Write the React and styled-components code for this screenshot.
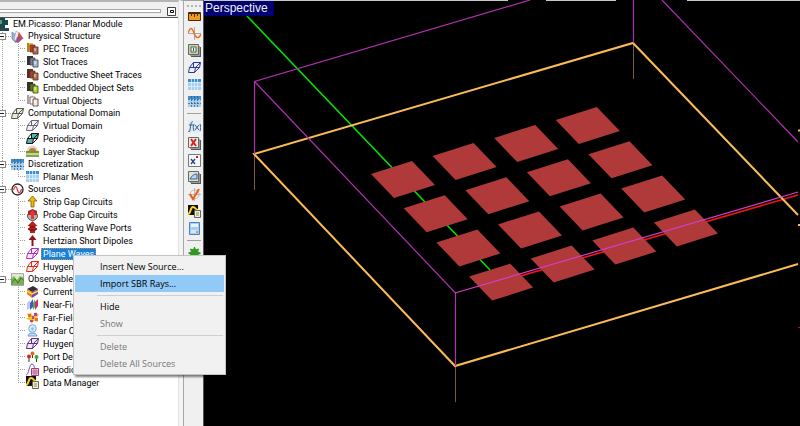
import React, { useState } from "react";
import styled, { createGlobalStyle, css } from "styled-components";

const GlobalStyle = createGlobalStyle`
  * {
    box-sizing: border-box;
  }

  body {
    margin: 0;
    overflow: hidden;
    background: #f0f0f0;
    font-family: Roboto, "Liberation Sans", sans-serif;
    font-size: 9px;
    color: #000;
  }

  button {
    padding: 0;
    border: none;
    background: none;
    font: inherit;
    color: inherit;
  }

  ul {
    margin: 0;
    padding: 0;
    list-style: none;
  }
`;

const Window = styled.main`
  position: relative;
  display: flex;
  height: 100vh;
`;

const SidePanel = styled.aside`
  display: flex;
  flex-direction: column;
  flex: 0 0 179px;
  border-top: 2px solid #b4b4b4;
  border-right: 1px solid #e2e2e2;
`;

const PanelHeader = styled.header`
  display: flex;
  align-items: center;
  gap: 6px;
  height: 16px;
  padding: 3px 2px 0 0;
  border-bottom: 1px solid #555;
`;

const Grip = styled.div`
  flex: 1;
  height: 4px;
  border: 1px solid #a8a8a8;
  border-left: none;
  background: #fff;
`;

const PanelButton = styled.button`
  display: flex;
  width: 9px;
  height: 9px;
`;

const Tree = styled.div`
  flex: 1;
  background: #fff;
  white-space: nowrap;
  overflow: hidden;
`;

const dotsDown = "repeating-linear-gradient(#a0a0a0 0 1px, #fff 1px 2px)";
const dotsAcross =
  "repeating-linear-gradient(90deg, #a0a0a0 0 1px, #fff 1px 2px)";

const Group = styled.section`
  ${(props) =>
    !props.$last &&
    css`
      background: ${dotsDown} 2px 0 / 1px 100% no-repeat;
    `}
`;

const GroupRow = styled.div`
  display: flex;
  align-items: center;
  height: 12px;
`;

const Expander = styled.button`
  display: flex;
  width: 6px;
  height: 7px;
  border: 1px solid #888;
  border-left: none;
  background: linear-gradient(#222, #222) 0 2px / 4px 1px no-repeat #fff;
`;

const Link = styled.span`
  width: 5px;
  height: 1px;
  background: ${dotsAcross};
`;

const LeafList = styled.ul`
  margin-left: 18px;
`;

const Leaf = styled.li`
  display: flex;
  align-items: center;
  height: 13px;
`;

const Elbow = styled.span`
  align-self: stretch;
  width: 8px;
  background: ${dotsDown} 0 0 / 1px ${(props) => (props.$last ? "7px" : "100%")}
      no-repeat,
    ${dotsAcross} 0 6px / 100% 1px no-repeat;
`;

const Icon = styled.svg`
  flex: none;
  display: block;
  width: ${(props) => props.$width || 13}px;
  height: ${(props) => props.$height || 13}px;
`;

const Label = styled.button`
  height: 12px;
  margin-left: 2px;
  padding: 0 2px;
  line-height: 12px;
  ${(props) =>
    props.$selected &&
    css`
      background: #1482dc;
      color: #fff;
      outline: 1px dotted #d98a3c;
      outline-offset: -1px;
    `}
`;

const Toolbar = styled.nav`
  display: flex;
  flex-direction: column;
  align-items: center;
  flex: 0 0 24px;
  padding: 4px 0 0 2px;
  border-top: 1px solid #a0a0a0;
  border-left: 4px solid #f4f4f4;
  box-shadow: inset 1px 0 #a8a8a8;
`;

const ToolbarGrip = styled.div`
  width: 14px;
  height: 2px;
  margin-bottom: 1px;
  background: repeating-linear-gradient(90deg, #b4b4b4 0 2px, transparent 2px 4px);
`;

const ToolGroup = styled.div`
  display: flex;
  flex-direction: column;
  & + & {
    margin-top: 3px;
    padding-top: 4px;
    border-top: 1px solid #a0a0a0;
  }
`;

const ToolButton = styled.button`
  display: flex;
  align-items: center;
  justify-content: center;
  width: 14px;
  height: 17px;
`;

const Viewport = styled.section`
  position: relative;
  flex: 1;
  min-width: 0;
  background: #000;
  border-left: 1px solid #555;
`;

const Scene = styled.svg`
  display: block;
  width: 100%;
  height: 100%;
`;

const ViewName = styled.h1`
  position: absolute;
  top: 1px;
  left: 0;
  margin: 0;
  padding: 0 6px 0 1px;
  background: #000070;
  color: #f0f0f0;
  font: 12px/15px "Liberation Sans", sans-serif;
`;

const ContextMenu = styled.div`
  position: absolute;
  top: 255px;
  left: 73px;
  width: 153px;
  padding: 2px 1px;
  border: 1px solid #c4c4c4;
  background: #f1f1f1;
  box-shadow: 2px 2px 2px rgba(0, 0, 0, 0.5);
  font-family: "Open Sans", "Noto Sans", sans-serif;
`;

const MenuItem = styled.button`
  display: block;
  width: 100%;
  height: 17px;
  padding-left: 25px;
  line-height: 17px;
  text-align: left;

  &:disabled {
    color: #777;
  }

  ${(props) =>
    props.$active &&
    css`
      background: #91c9f7;
    `}
`;

const MenuDivider = styled.hr`
  height: 1px;
  margin: 3px 1px 2px 22px;
  border: none;
  background: #cfcfcf;
`;

function Sheets({ back, mid, front }) {
  return (
    <>
      <path d="M1 1h6v9H1z" fill={back} />
      <path d="M1 1h2v9H1z" fill="#333" opacity=".4" />
      <path d="M4 3h5v7H4z" fill={mid} stroke="#5b2a22" strokeWidth=".7" />
      <path d="M7 5h5v7H7z" fill={front} stroke="#432" strokeWidth=".8" />
      <path d="M8 6h2v3H8z" fill="#fff" opacity=".4" />
    </>
  );
}

function Wire({ color, fill = "none" }) {
  return (
    <g stroke={color} fill={fill}>
      <path d="M5.500 1.500h7l-1 5h-6z" />
      <path d="M1.500 6.500h6l-1 5h-6z" />
      <path d="M5.500 1.500l-4 5M12.500 1.500l-5 5M11.500 6.500l-5 5" fill="none" />
    </g>
  );
}

function Grid({ dark }) {
  return (
    <>
      <path d="M0 1h13v11H0z" fill="#a9cff0" />
      <path d="M0 1h13v3H0z" fill="#3c8fd0" />
      <path
        d="M0 4.5h13M0 8.5h13M3.5 1v11M6.5 1v11M9.5 1v11"
        stroke={dark ? "#36536e" : "#e8f4ff"}
        strokeWidth=".7"
        strokeDasharray={dark ? "2 1" : "none"}
      />
    </>
  );
}

function Page({ children, tint = "#eee" }) {
  return (
    <>
      <path d="M3 3h10v10H3z" fill="#555" />
      <path d="M2 2h10v10H2z" fill="#999" />
      <path d="M.5.5h10v10H.5z" fill={tint} stroke="#666" />
      {children}
    </>
  );
}

const ICONS = {
  root: (
    <>
      <path d="M0 0h5v2h3v5H5v3h4v3H0z" fill="#174b48" />
      <path d="M0 10h9v2H0z" fill="#345" />
      <path d="M0 2h2v4H0z" fill="#5b9a91" />
    </>
  ),
  physical: (
    <>
      <path d="M1 2l4 3v8L1 9z" fill="#8db5dc" stroke="#55779c" strokeWidth=".6" />
      <path d="M5 1l3 2-2 9-3-2z" fill="#eee" stroke="#999" strokeWidth=".6" />
      <path d="M8 2l4 6-5 5-2-1z" fill="#d84848" />
      <path d="M6 7l7 1-5 4-4-1z" fill="#7b5aa4" opacity=".7" />
    </>
  ),
  pec: <Sheets back="#f0c51c" mid="#c43a2d" front="#b56a55" />,
  slot: <Sheets back="#30363c" mid="#77838f" front="#9fc5e4" />,
  sheet: <Sheets back="#6c3021" mid="#a54839" front="#b96c48" />,
  embedded: <Sheets back="#2a3a20" mid="#4d7c28" front="#a4dc28" />,
  virtual: <Sheets back="#eee" mid="#fff" front="#f5e8e8" />,
  domain: <Wire color="#555" fill="#e4ecd4" />,
  virtualDomain: <Wire color="#667" fill="#f0f2f5" />,
  periodicity: <Wire color="#111" fill="#53b6ae" />,
  stackup: (
    <>
      <path d="M1 6a5 5 0 0 1 11 0z" fill="#ded8bc" />
      <path d="M3 6a3.500 3 0 0 1 7 0z" fill="#d86a4a" />
      <path d="M0 6h13v2H0z" fill="#5d9c36" />
      <path d="M0 8h13v2H0z" fill="#c5dc62" />
      <path d="M0 10h13v2H0z" fill="#8b9a78" />
    </>
  ),
  mesh: <Grid />,
  meshDark: <Grid dark />,
  sources: (
    <>
      <circle cx="6.500" cy="6.500" r="5.500" fill="#fff" stroke="#222" strokeWidth="1.300" />
      <path d="M2.500 7c1.500-5 3-4 4 0s2.500 4 4-1" fill="none" stroke="#d33" strokeWidth="1.200" />
    </>
  ),
  strip: (
    <path d="M6.500 1l4.500 5H8v6H5V6H2z" fill="#f2b705" stroke="#7c5a0a" strokeWidth=".8" />
  ),
  probe: (
    <>
      <ellipse cx="6.500" cy="8" rx="5" ry="4.500" fill="#b8b0b0" stroke="#555" />
      <path d="M2 3l4.500-2L11 3v4H2z" fill="#a5282c" />
      <path d="M6.500 2l3.500 4H8v5H5V6H3z" fill="#e23535" />
    </>
  ),
  scatter: (
    <>
      <path d="M6.500 0l5 5H9v2h2v2H9v3H4V9H2V7h2V5H1.500z" fill="#c01c1c" />
      <path d="M3 6h7M3 9h7" stroke="#551313" />
    </>
  ),
  dipole: <path d="M6.500 1l4 5H7.500v6h-2V6h-3z" fill="#8c1420" />,
  plane: <Wire color="#b42cc4" fill="#fbeaff" />,
  huygensSource: <Wire color="#e02a1c" fill="#ffeceb" />,
  observables: (
    <>
      <path d="M0 1h13v11H0z" fill="#79b254" />
      <path d="M0 1h13v4L9 3 6 7 3 3 0 6z" fill="#dfead2" />
      <path d="M0 11l4-5 3 4 3-5 3 3" stroke="#42751f" fill="none" />
      <path d="M.5.5h12v12H.5z" fill="none" stroke="#888" strokeWidth=".7" />
    </>
  ),
  current: (
    <>
      <path d="M1 4l6-3 5 3-6 3z" fill="#3c2b34" />
      <path d="M1 4l5 3v6L1 9z" fill="#e27a28" />
      <path d="M6 7l6-3v5l-6 4z" fill="#7c42ba" />
      <path d="M1 6l5 3 6-3" stroke="#f2e12e" strokeWidth="1.500" fill="none" />
    </>
  ),
  near: (
    <>
      <path d="M1 5l3-3v8l-3 2z" fill="#c8c8dc" />
      <path d="M4 5l3-4v8l-3 3z" fill="#4657c8" />
      <path d="M7 5l2-4v8l-2 3z" fill="#3cba42" />
      <path d="M9 4l3-3v7l-3 4z" fill="#d42a72" />
    </>
  ),
  far: (
    <>
      <path d="M1 3l4-1 2 3 3-4 3 3-3 3 2 4-4-1-3 3-1-4-4-1 3-2z" fill="#f2c41a" />
      <path d="M2 3h3v3H2zM9 7h3v3H9z" fill="#ec6c2a" />
      <path d="M8 2h3v3H8zM4 9h3v2H4zM6 5h2v3H6z" fill="#b53cc0" />
    </>
  ),
  radar: (
    <>
      <path d="M2 12c0-4 9-4 9 0z" fill="#c4dcf2" stroke="#6c9ccc" />
      <circle cx="6.500" cy="4.500" r="3.800" fill="#dcebfa" stroke="#78a8d8" />
      <path d="M5 4l2-1 1 2-2 2z" fill="#8fb8e0" />
    </>
  ),
  huygens: <Wire color="#5d2c8c" fill="#f0e8fa" />,
  port: (
    <>
      <path d="M3 6v6M6.500 3v5M10.500 6v6" stroke="#333" />
      <circle cx="3" cy="6.500" r="2" fill="#d22" />
      <circle cx="6.500" cy="3.500" r="2" fill="#d97020" />
      <circle cx="10.500" cy="7" r="2" fill="#2fae3a" />
    </>
  ),
  periodic: (
    <>
      <path d="M0 12c3 0 3-11 6-11 2 0 2 3 3 5" fill="none" stroke="#6b50b8" />
      <path d="M5.500 5.500h7v7h-7z" fill="#f3d3e2" stroke="#a33c7b" />
      <path d="M8 5v7M10 5v7M5 8h7M5 10h7" stroke="#a33c7b" strokeWidth=".6" />
    </>
  ),
  data: (
    <>
      <path d="M0 0h10v10H0z" fill="#111" />
      <path d="M0 9c3 0 2-7 5-7s2 3 5 3" stroke="#ffd51e" strokeWidth="2" fill="none" />
      <path d="M6.500 5.500h6v7h-6z" fill="#f4edcf" stroke="#665" />
      <path d="M8 8h3M8 10h3" stroke="#887" />
    </>
  ),
  ruler: (
    <>
      <path d="M.5 2.500h12v8H.5z" fill="#f39a1c" stroke="#4a2b08" />
      <path d="M1 3h11v1H1z" fill="#3a2208" />
      <path d="M3.500 3v3M6.500 3v4M9.500 3v3" stroke="#4a2b08" />
    </>
  ),
  wave: (
    <>
      <path d="M0 6.500h13M6.500 0v13" stroke="#99a" strokeWidth=".8" />
      <path d="M0 6c2-6 4-6 6 0s5 6 7 1" stroke="#ee6c1c" strokeWidth="1.500" fill="none" />
    </>
  ),
  objects: (
    <Page tint="#c8cda8">
      <path d="M3 3h5v5H3z" fill="#eef" stroke="#486a4c" />
      <path d="M5.500 4v3" stroke="#263" />
    </Page>
  ),
  box: <Wire color="#2838a0" fill="#eef2ff" />,
  fx: (
    <>
      <path d="M0 0h13v13H0z" fill="#e2ecf4" />
      <path
        d="M5 2c-2-1-2 2-3 8 0 2-1 2-2 1M1 5h4M6 4c-1 2-1 5 0 7M12 4c1 2 1 5 0 7M7 5l4 5M11 5l-4 5"
        fill="none"
        stroke="#2b5784"
      />
    </>
  ),
  deleteVar: (
    <Page>
      <path d="M3 2l5 7M8 2L3 9" stroke="#e0201c" strokeWidth="2" />
    </Page>
  ),
  power: (
    <>
      <path d="M.5.5h12v12H.5z" fill="#f5f6f8" stroke="#777" />
      <path d="M3 5l4 5M7 5l-4 5" stroke="#27408c" strokeWidth="1.300" />
      <path d="M8 2h2v2H8z" fill="#c22" />
    </>
  ),
  graph: (
    <Page tint="#dfe4cc">
      <path d="M2 8h7V3C5 3 4 5 2 8z" fill="#b9d4ee" stroke="#3860a0" />
    </Page>
  ),
  check: (
    <>
      <circle cx="6.500" cy="6.500" r="4.500" fill="none" stroke="#bbb" />
      <path d="M6.500 0v13M0 6.500h13" stroke="#bbb" />
      <path d="M2 6l3 5 6-10" fill="none" stroke="#ee5a1c" strokeWidth="2" />
    </>
  ),
  calc: (
    <>
      <path d="M1.500.5h10v12h-10z" fill="#a8cff2" stroke="#4a82c0" />
      <path d="M3 2h7v3H3z" fill="#e8f4ff" />
      <path d="M3 8h7v3H3z" fill="#d2e6f8" />
      <path d="M8 9h2v2H8z" fill="#e89040" />
    </>
  ),
  gear: (
    <path
      d="M6.500 0l1 3 3-1-1 3 3 1-3 2 1 3-3-1-1 3-1-3-3 1 1-3-3-2 3-1-1-3 3 1z"
      fill="#2f9a1c"
      stroke="#2f9a1c"
    />
  ),
};

const GROUPS = [
  {
    name: "Physical Structure",
    icon: "physical",
    items: [
      ["PEC Traces", "pec"],
      ["Slot Traces", "slot"],
      ["Conductive Sheet Traces", "sheet"],
      ["Embedded Object Sets", "embedded"],
      ["Virtual Objects", "virtual"],
    ],
  },
  {
    name: "Computational Domain",
    icon: "domain",
    items: [
      ["Virtual Domain", "virtualDomain"],
      ["Periodicity", "periodicity"],
      ["Layer Stackup", "stackup"],
    ],
  },
  {
    name: "Discretization",
    icon: "meshDark",
    items: [["Planar Mesh", "mesh"]],
  },
  {
    name: "Sources",
    icon: "sources",
    items: [
      ["Strip Gap Circuits", "strip"],
      ["Probe Gap Circuits", "probe"],
      ["Scattering Wave Ports", "scatter"],
      ["Hertzian Short Dipoles", "dipole"],
      ["Plane Waves", "plane"],
      ["Huygens", "huygensSource"],
    ],
  },
  {
    name: "Observables",
    icon: "observables",
    items: [
      ["Current", "current"],
      ["Near-Field", "near"],
      ["Far-Field", "far"],
      ["Radar CS", "radar"],
      ["Huygens", "huygens"],
      ["Port Def", "port"],
      ["Periodic", "periodic"],
      ["Data Manager", "data"],
    ],
  },
];

const TOOLS = [
  ["ruler", "wave", "objects", "box", "mesh", "meshDark"],
  ["fx", "deleteVar", "power", "graph", "check", "data", "calc"],
  ["gear"],
];

function Glyph({ name }) {
  return (
    <Icon viewBox="0 0 13 13" aria-hidden="true">
      {ICONS[name]}
    </Icon>
  );
}

function TreeGroup({ group, last, selected, onSelect }) {
  const [isOpen, setIsOpen] = useState(true);

  return (
    <Group $last={last}>
      <GroupRow>
        <Expander aria-label={group.name} onClick={() => setIsOpen(!isOpen)} />
        <Link />
        <Glyph name={group.icon} />
        <Label onClick={() => onSelect(group.name)}>{group.name}</Label>
      </GroupRow>
      {isOpen && (
        <LeafList>
          {group.items.map(([name, icon], index) => (
            <Leaf key={name}>
              <Elbow $last={index === group.items.length - 1} />
              <Glyph name={icon} />
              <Label
                $selected={selected === name}
                onClick={() => onSelect(name)}
              >
                {name}
              </Label>
            </Leaf>
          ))}
        </LeafList>
      )}
    </Group>
  );
}

const PATCH_COUNT = 4;

function Patches() {
  const patches = [];
  for (let row = 0; row < PATCH_COUNT; row++) {
    for (let col = 0; col < PATCH_COUNT; col++) {
      const x = row * 32.7 + col * 61.6;
      const y = row * 34.2 - col * 18;
      patches.push(
        <path
          key={`${row}-${col}`}
          d="M371 174l41-13 23 24-41 13z"
          transform={`translate(${x} ${y})`}
        />
      );
    }
  }
  return <g fill="#b03a3a">{patches}</g>;
}

function PlanarScene() {
  return (
    <Scene viewBox="204 0 596 426" preserveAspectRatio="xMinYMin slice">
      <path d="M204 .5h304M546 .5h70M687 .5h113" stroke="#c8c8c8" />
      <path d="M254.500 155v35M633.500 43v36M455.500 366v36" stroke="#7a5c3c" />
      <path d="M247 16l243 254" stroke="#00e600" strokeWidth="1.500" />
      <path d="M500 282l298-87" stroke="#f01414" strokeWidth="1.600" />
      <Patches />
      <g stroke="#fbbb55" strokeWidth="2" fill="none">
        <path d="M798 215L633 43 254 154 455 366 798 264" />
        <path d="M798 130.500h2M798 225h2" />
      </g>
      <g stroke="#b030b0" strokeWidth="1.200" fill="none">
        <path d="M530 0L254.500 81.500V154M254.500 81.500L455.500 293v73M633.500 0v43M662 0l136 142" />
      </g>
      <path d="M455 293l343-101" stroke="#d83cc8" strokeWidth="1.200" />
      <path d="M798 327.500h2" stroke="#d01010" />
    </Scene>
  );
}

export default function App() {
  const [selected, setSelected] = useState("Plane Waves");

  return (
    <>
      <GlobalStyle />
      <Window>
        <SidePanel>
          <PanelHeader>
            <Grip />
            <PanelButton aria-label="Maximize panel">
              <Icon viewBox="0 0 9 9" $width={9} $height={9}>
                <path d="M.5.5h8v8h-8z" fill="#fff" stroke="#444" />
                <path d="M3.500 3.500h3v2h-3z" fill="none" stroke="#000" />
              </Icon>
            </PanelButton>
          </PanelHeader>
          <Tree>
            <GroupRow>
              <Icon viewBox="0 0 9 13" $width={9} aria-hidden="true">
                {ICONS.root}
              </Icon>
              <Label onClick={() => setSelected("root")}>
                EM.Picasso: Planar Module
              </Label>
            </GroupRow>
            {GROUPS.map((group, index) => (
              <TreeGroup
                key={group.name}
                group={group}
                last={index === GROUPS.length - 1}
                selected={selected}
                onSelect={setSelected}
              />
            ))}
          </Tree>
        </SidePanel>
        <Toolbar>
          <ToolbarGrip />
          {TOOLS.map((tools) => (
            <ToolGroup key={tools[0]}>
              {tools.map((name) => (
                <ToolButton key={name} aria-label={name}>
                  <Glyph name={name} />
                </ToolButton>
              ))}
            </ToolGroup>
          ))}
        </Toolbar>
        <Viewport>
          <PlanarScene />
          <ViewName>Perspective</ViewName>
        </Viewport>
        <ContextMenu role="menu">
          <MenuItem role="menuitem">Insert New Source...</MenuItem>
          <MenuItem role="menuitem" $active>
            Import SBR Rays...
          </MenuItem>
          <MenuDivider />
          <MenuItem role="menuitem">Hide</MenuItem>
          <MenuItem role="menuitem" disabled>
            Show
          </MenuItem>
          <MenuDivider />
          <MenuItem role="menuitem" disabled>
            Delete
          </MenuItem>
          <MenuItem role="menuitem" disabled>
            Delete All Sources
          </MenuItem>
        </ContextMenu>
      </Window>
    </>
  );
}
